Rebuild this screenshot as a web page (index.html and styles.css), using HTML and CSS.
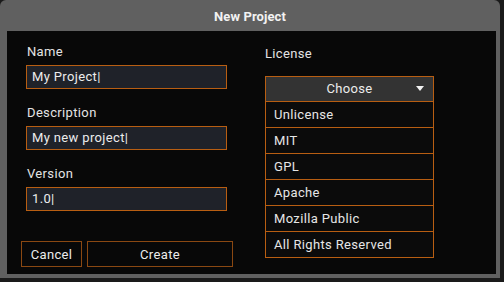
FILE: index.html
```html
<!doctype html>
<html>
<head>
    <meta charset="utf-8">
    <title>New Project</title>
    <link rel="stylesheet" href="styles.css">
</head>
<body class="np-body">
<div class="np-window">
    <div class="np-titlebar">New Project</div>

    <div class="np-content">
        <div class="np-left">
            <div class="np-field">
                <p class="np-label">Name</p>
                <div class="np-input">My Project|</div>
            </div>
            <div class="np-field">
                <p class="np-label">Description</p>
                <div class="np-input">My new project|</div>
            </div>
            <div class="np-field">
                <p class="np-label">Version</p>
                <div class="np-input">1.0|</div>
            </div>

            <div class="np-buttons">
                <button class="np-button np-cancel">Cancel</button>
                <button class="np-button np-create">Create</button>
            </div>
        </div>

        <div class="np-right">
            <p class="np-label np-license-label">License</p>
            <div class="np-dropdown">
                <div class="np-dropdown-head">
                    <span>Choose</span>
                    <span class="np-caret"></span>
                </div>
                <ul class="np-options">
                    <li>Unlicense</li>
                    <li>MIT</li>
                    <li>GPL</li>
                    <li>Apache</li>
                    <li>Mozilla Public</li>
                    <li>All Rights Reserved</li>
                </ul>
            </div>
        </div>
    </div>
</div>
</body>
</html>
```

FILE: styles.css
```css
.np-body {
    margin: 0;
    background: #1a1a1a;
    font-family: 'Roboto', 'Liberation Sans', sans-serif;
    font-size: 13px;
    letter-spacing: 0.35px;
    color: #e6e6e6;
}

/* outer frame */
.np-window {
    width: 500px;
    height: 278px;
    background: #606060;
    border-radius: 6px 6px 0 0;
    box-sizing: border-box;
    padding: 0 4px 4px 7px;
    display: flex;
    flex-direction: column;
}

.np-titlebar {
    height: 29px;
    padding-top: 2px;
    line-height: 29px;
    text-align: center;
    font-weight: bold;
    letter-spacing: 0.1px;
    color: #f2f2f2;
    margin-left: -7px;
    margin-right: -4px;
}

.np-content {
    flex: 1;
    background: #080808;
    display: flex;
    padding-top: 13px;
    box-sizing: border-box;
}

/* left column */
.np-left {
    width: 212px;
    padding-left: 14px;
    display: flex;
    flex-direction: column;
}

.np-field {
    padding-left: 5px;
    margin-bottom: 16px;
}

.np-label {
    margin: 0 0 5px;
    padding-left: 1px;
    line-height: 16px;
    color: #e4e4e4;
}

.np-input {
    width: 201px;
    height: 24px;
    box-sizing: border-box;
    border: 1px solid #b85e12;
    background: #1f2229;
    padding: 0 5px;
    line-height: 22px;
    color: #ececec;
}

.np-buttons {
    display: flex;
    gap: 5px;
    margin-top: 14px;
}

.np-button {
    height: 26px;
    box-sizing: border-box;
    background: #080808;
    border: 1px solid #8a4812;
    color: #ececec;
    font-family: inherit;
    font-size: 13px;
    letter-spacing: inherit;
    padding: 0;
}

.np-cancel {
    width: 61px;
}

.np-create {
    width: 146px;
}

/* right column */
.np-right {
    padding-left: 32px;
}

.np-license-label {
    margin-top: 2px;
    margin-bottom: 14px;
    padding-left: 0;
}

.np-dropdown {
    width: 167px;
    border: 1px solid #b85e12;
    border-bottom: 0;
}

.np-dropdown-head {
    height: 24px;
    background: #333333;
    border-bottom: 1px solid #b85e12;
    position: relative;
    text-align: center;
    line-height: 24px;
    color: #ececec;
}

.np-caret {
    position: absolute;
    right: 9px;
    top: 9px;
    width: 0;
    height: 0;
    border-left: 4.5px solid transparent;
    border-right: 4.5px solid transparent;
    border-top: 5px solid #f2f2f2;
}

.np-options {
    list-style: none;
    margin: 0;
    padding: 0;
}

.np-options li {
    height: 25px;
    line-height: 25px;
    padding-left: 8px;
    background: #0b0b0b;
    border-bottom: 1px solid #b85e12;
    color: #e6e6e6;
}
```
